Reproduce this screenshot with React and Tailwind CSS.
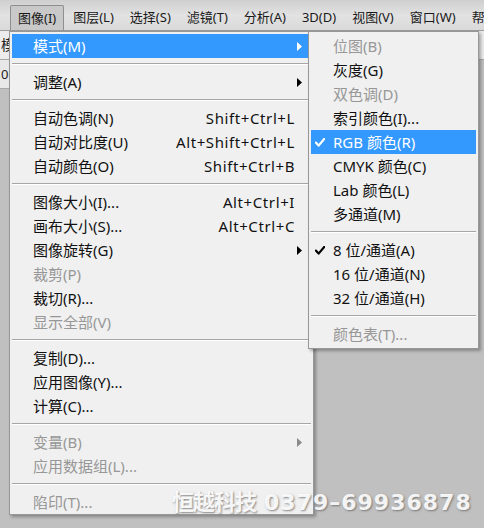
import React from 'react';

const FONT = '"Noto Sans", "Noto Sans CJK SC", sans-serif';

const topMenus = ['图像(I)', '图层(L)', '选择(S)', '滤镜(T)', '分析(A)', '3D(D)', '视图(V)', '窗口(W)', '帮'];

// main "图像" menu
const mainItems = [
  { label: '模式(M)', sub: true, active: true },
  { sep: true },
  { label: '调整(A)', sub: true },
  { sep: true },
  { label: '自动色调(N)', key: 'Shift+Ctrl+L' },
  { label: '自动对比度(U)', key: 'Alt+Shift+Ctrl+L' },
  { label: '自动颜色(O)', key: 'Shift+Ctrl+B' },
  { sep: true },
  { label: '图像大小(I)...', key: 'Alt+Ctrl+I' },
  { label: '画布大小(S)...', key: 'Alt+Ctrl+C' },
  { label: '图像旋转(G)', sub: true },
  { label: '裁剪(P)', disabled: true },
  { label: '裁切(R)...' },
  { label: '显示全部(V)', disabled: true },
  { sep: true },
  { label: '复制(D)...' },
  { label: '应用图像(Y)...' },
  { label: '计算(C)...' },
  { sep: true },
  { label: '变量(B)', sub: true, disabled: true },
  { label: '应用数据组(L)...', disabled: true },
  { sep: true },
  { label: '陷印(T)...', disabled: true },
];

// "模式" submenu
const modeItems = [
  { label: '位图(B)', disabled: true },
  { label: '灰度(G)' },
  { label: '双色调(D)', disabled: true },
  { label: '索引颜色(I)...' },
  { label: 'RGB 颜色(R)', checked: true, active: true },
  { label: 'CMYK 颜色(C)' },
  { label: 'Lab 颜色(L)' },
  { label: '多通道(M)' },
  { sep: true },
  { label: '8 位/通道(A)', checked: true },
  { label: '16 位/通道(N)' },
  { label: '32 位/通道(H)' },
  { sep: true },
  { label: '颜色表(T)...', disabled: true },
];

function Arrow({ color }) {
  return (
    <svg width="5" height="9" viewBox="0 0 5 9" className="block">
      <path d="M0 0 L5 4.5 L0 9 Z" fill={color} />
    </svg>
  );
}

function Check({ color }) {
  return (
    <svg width="10" height="9" viewBox="0 0 10 9" className="block">
      <path d="M0.8 4.6 L3.6 7.6 L9.2 0.9" fill="none" stroke={color} strokeWidth="2.2" strokeLinecap="round" strokeLinejoin="round" />
    </svg>
  );
}

function Separator() {
  return (
    <div className="h-[12px] flex items-center">
      <div className="w-full h-px bg-[#a6a6a6] border-b border-white box-content" />
    </div>
  );
}

function MainRow({ item }) {
  const text = item.active ? 'text-white' : item.disabled ? 'text-[#979797]' : 'text-[#111]';
  const arrowColor = item.active ? '#ffffff' : item.disabled ? '#8a8a8a' : '#000000';
  return (
    <div className={`h-[24px] flex items-center pl-[21px] ${item.active ? 'bg-[#3399ff]' : ''} ${text}`}>
      <span className="flex-1 whitespace-nowrap">{item.label}</span>
      {item.key && <span className="whitespace-nowrap tracking-[0.6px]">{item.key}</span>}
      <span className="w-[16px] flex items-center pl-[2px]">{item.sub && <Arrow color={arrowColor} />}</span>
    </div>
  );
}

function SubRow({ item }) {
  const text = item.active ? 'text-white' : item.disabled ? 'text-[#979797]' : 'text-[#111]';
  return (
    <div className={`h-[24px] flex items-center ${item.active ? 'bg-[#3399ff]' : ''} ${text}`}>
      <span className="w-[22px] flex items-center pl-[4px]">
        {item.checked && <Check color={item.active ? '#ffffff' : '#000000'} />}
      </span>
      <span className="whitespace-nowrap">{item.label}</span>
    </div>
  );
}

export default function App() {
  return (
    <div className="relative w-[484px] h-[528px] overflow-hidden bg-[#c0c0c0] text-[15px] leading-none" style={{ fontFamily: FONT }}>
      {/* menu bar */}
      <div className="h-[31px] bg-gradient-to-b from-[#cfcfcf] via-[#e2e2e2] to-[#dadada] border-b border-[#9c9c9c] flex items-end pl-[10px] gap-[2px] text-[13px] text-[#1a1a1a]">
        {topMenus.map((m, i) => (
          <div
            key={m}
            className={`h-[25px] px-[7px] flex items-center whitespace-nowrap ${i === 0 ? 'bg-[#c9c9c9] border border-b-0 border-[#8f8f8f] rounded-t-[2px] px-[6px]' : ''}`}
          >
            {m}
          </div>
        ))}
      </div>

      {/* options bar + tab strip behind the menu */}
      <div className="h-[29px] bg-[#ececec] border-b border-[#a8a8a8] flex items-center pl-[1px] text-[14px] text-[#222]">
        模
      </div>
      <div className="h-[29px] w-[40px] bg-[#e8e8e8] border-b border-[#a8a8a8] flex items-center pl-[1px] text-[13px] text-[#222]">
        0-
      </div>

      {/* 图像 menu */}
      <div className="absolute left-[9px] top-[31px] w-[305px] bg-[#f0f0f0] border border-[#979797] px-[2px] pt-[2px] shadow-[2px_2px_3px_rgba(0,0,0,0.3)]">
        {mainItems.map((it, i) => (it.sep ? <Separator key={i} /> : <MainRow key={i} item={it} />))}
      </div>

      {/* 模式 submenu */}
      <div className="absolute left-[308px] top-[31px] w-[171px] bg-[#f0f0f0] border border-[#979797] px-[2px] py-[2px] shadow-[2px_2px_3px_rgba(0,0,0,0.3)]">
        {modeItems.map((it, i) => (it.sep ? <Separator key={i} /> : <SubRow key={i} item={it} />))}
      </div>

      {/* watermark */}
      <div
        className="absolute left-[172px] top-[489px] text-[22px] font-bold text-white/90 whitespace-nowrap leading-none"
        style={{ textShadow: '1px 1px 2px rgba(90,90,90,0.7)' }}
      >
        <span style={{ fontFamily: '"Noto Sans CJK SC", sans-serif' }} className="tracking-[-1px]">恒越科技</span>
        <span style={{ fontFamily: '"DejaVu Sans", sans-serif' }} className="ml-[8px] tracking-[1px]">0379–69936878</span>
      </div>
    </div>
  );
}
